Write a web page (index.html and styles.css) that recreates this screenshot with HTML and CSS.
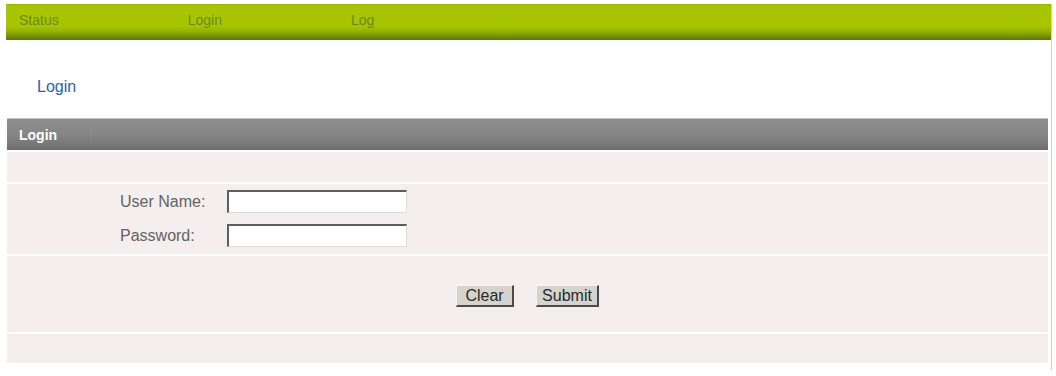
FILE: index.html
```html
<!DOCTYPE html>
<html lang="en">
<head>
<meta charset="utf-8">
<title>Login</title>
<link rel="stylesheet" href="styles.css">
</head>
<body>
<div class="page">
  <nav class="topnav">
    <a class="navitem" href="#">Status</a>
    <a class="navitem" href="#">Login</a>
    <a class="navitem" href="#">Log</a>
  </nav>
  <div class="crumb"><a class="crumb-link" href="#">Login</a></div>
  <div class="panel">
    <div class="panel-head"><span class="panel-title">Login</span><span class="head-sep"></span></div>
    <div class="row row-blank"></div>
    <div class="row row-fields">
      <label class="field-label" for="user">User Name:</label>
      <input class="field-input" id="user" type="text">
      <label class="field-label" for="pass">Password:</label>
      <input class="field-input" id="pass" type="password">
    </div>
    <div class="row row-buttons">
      <button class="btn btn-clear" type="button">Clear</button>
      <button class="btn btn-submit" type="button">Submit</button>
    </div>
    <div class="row row-foot"></div>
  </div>
</div>
</body>
</html>
```

FILE: styles.css
```css
html, body {
  margin: 0;
  padding: 0;
  background: #ffffff;
}

body {
  font-family: "Liberation Sans", Arial, sans-serif;
}

.page {
  margin: 4px 0 0 6px;
  width: 1045px;
  height: 366px;
  border-right: 1px solid #d2d2d2;
  box-sizing: content-box;
}

.topnav {
  height: 36px;
  box-sizing: border-box;
  padding: 8px 0 0 13px;
  display: flex;
  gap: 129px;
  background: linear-gradient(#93b000 0px, #a6c600 2px, #a6c500 62%, #94b200 76%, #6f8c00 92%, #5c7700 100%);
}

.navitem {
  font-size: 14px;
  line-height: 16px;
  color: #6f881c;
  text-decoration: none;
}

.crumb {
  padding: 38px 0 22px 31px;
}

.crumb-link {
  display: block;
  font-size: 16px;
  line-height: 18px;
  color: #2d62a6;
  text-decoration: none;
}

.panel {
  margin: 0 3px 0 1px;
  display: flex;
  flex-direction: column;
  gap: 2px;
}

.panel-head {
  height: 32px;
  box-sizing: border-box;
  border-top: 1px solid #c4c4c4;
  background: linear-gradient(#8e8e8e, #858585 50%, #767676 85%, #6a6a6a);
  display: flex;
  align-items: center;
  padding-left: 12px;
}

.panel-title {
  font-size: 14px;
  font-weight: bold;
  color: #ffffff;
  width: 71px;
}

.head-sep {
  width: 1px;
  height: 20px;
  background: rgba(255, 255, 255, 0.05);
}

.row {
  background: #f5eeee;
}

.row-blank {
  height: 30px;
}

.row-fields {
  height: 70px;
  box-sizing: border-box;
  padding: 6px 0 0 113px;
  display: grid;
  grid-template-columns: 107px 180px;
  grid-auto-rows: 23px;
  row-gap: 11px;
  align-items: center;
}

.field-label {
  font-size: 16px;
  line-height: 18px;
  color: #636363;
}

.field-input {
  width: 180px;
  height: 23px;
  box-sizing: border-box;
  margin: 0;
  padding: 0 3px;
  background: #ffffff;
  border-style: solid;
  border-width: 2px 1px 1px 2px;
  border-color: #5e5e5e #dcdcdc #dcdcdc #5e5e5e;
  font-family: "Liberation Sans", Arial, sans-serif;
  font-size: 14px;
}

.row-buttons {
  height: 76px;
  box-sizing: border-box;
  padding-top: 29px;
  display: flex;
  justify-content: center;
  align-items: flex-start;
  gap: 22px;
}

.btn {
  height: 22px;
  margin: 0;
  padding: 0;
  box-sizing: border-box;
  background: #d6d3cd;
  border-style: solid;
  border-width: 1px 2px 2px 1px;
  border-color: #f4f4f4 #4a4a4a #4a4a4a #f4f4f4;
  font-family: "Liberation Sans", Arial, sans-serif;
  font-size: 16px;
  line-height: 18px;
  color: #2a2a2a;
}

.btn-clear {
  width: 58px;
}

.btn-submit {
  width: 63px;
}

.row-foot {
  height: 29px;
}
```
